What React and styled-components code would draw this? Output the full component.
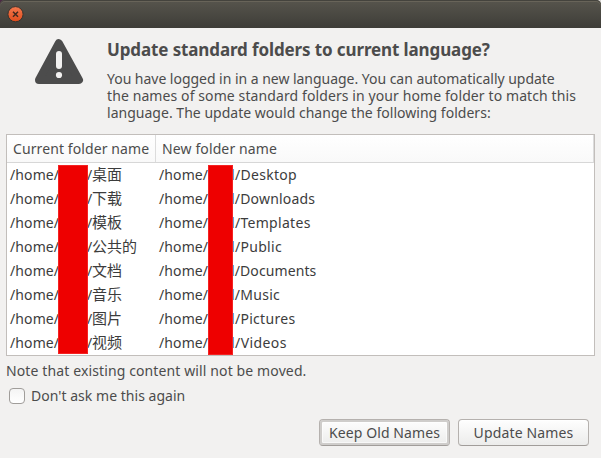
import React from "react";
import styled, { createGlobalStyle } from "styled-components";

const GlobalStyle = createGlobalStyle`
  *, *::before, *::after { box-sizing: border-box; }
  body { margin: 0; background: #f2f1f0; }
`;

const Dialog = styled.div`
  display: flex;
  flex-direction: column;
  width: 601px;
  height: 458px;
  overflow: hidden;
  background: #f2f1f0;
  color: #4c4c4c;
  font-family: "Noto Sans", "Noto Sans CJK SC", sans-serif;
  font-size: 14px;
`;

const TitleBarBackdrop = styled.header`
  flex: none;
  height: 28px;
  background: linear-gradient(90deg, #4b2b44 50%, #d8d6d3 50%);
`;

const TitleBar = styled.div`
  display: flex;
  align-items: center;
  height: 28px;
  padding: 1px 0 0 7px;
  border-radius: 5px 5px 0 0;
  background: linear-gradient(#57554d, #3e3d38);
  box-shadow: inset 0 1px #44433d, inset 0 2px #686459;
`;

const CloseButton = styled.button`
  display: block;
  width: 17px;
  height: 17px;
  padding: 0;
  border: 0;
  background: none;
`;

const Intro = styled.section`
  display: flex;
  height: 106px;
  padding: 10px 0 0 34px;
`;

const WarningIcon = styled.svg`
  flex: none;
  width: 50px;
  height: 47px;
  margin-right: 23px;
`;

const Heading = styled.h1`
  margin: 0 0 9px;
  font-size: 17px;
  font-weight: 700;
  line-height: 23px;
  letter-spacing: -0.12px;
  white-space: nowrap;
`;

const Line = styled.span`
  display: block;
  line-height: ${(p) => p.$height || 17}px;
  letter-spacing: ${(p) => p.$track || 0}px;
  white-space: nowrap;
`;

const Table = styled.section`
  position: relative;
  flex: none;
  width: 589px;
  height: 222px;
  margin-left: 6px;
  border: 1px solid #c2bebb;
  background: #fff;
  color: #3c3c3c;
`;

const Row = styled.div`
  display: grid;
  grid-template-columns: 149px 1fr;
  height: 24px;
`;

const HeaderRow = styled(Row)`
  height: 28px;
  border-right: 1px solid #dcdcdc;
  border-bottom: 1px solid #d7d7d7;
  background: linear-gradient(#fff, #f9f9f9);
  color: #4c4c4c;
`;

const HeaderCell = styled.div`
  padding-left: 6px;
  border-right: ${(p) => (p.$divider ? "1px solid #dcdcdc" : "0")};
`;

const PathCell = styled.div`
  display: grid;
  grid-template-columns: ${(p) => p.$stem}px 1fr;
  padding-left: 3px;
`;

const Chinese = styled.span`
  display: flex;
  font-size: 15px;
  line-height: 23px;
`;

const Slash = styled.span`
  width: 5px;
  font-size: 14px;
  line-height: 24px;
`;

const Redaction = styled.div`
  position: absolute;
  top: 30px;
  left: ${(p) => p.$left}px;
  width: ${(p) => p.$width}px;
  height: ${(p) => p.$height}px;
  border: 1px solid #f52222;
  background: #ee0000;
`;

const Note = styled.div`
  flex: none;
  height: 29px;
  padding: 4px 0 0 6px;
`;

const CheckLabel = styled.label`
  display: flex;
  align-items: center;
  gap: 6px;
  height: 22px;
  padding-left: 9px;
`;

const CheckBox = styled.input`
  appearance: none;
  width: 16px;
  height: 16px;
  margin: 0;
  border: 1px solid #a09d9a;
  border-radius: 4px;
  background: linear-gradient(#f4f4f4, #fff);
`;

const Actions = styled.footer`
  display: flex;
  justify-content: flex-end;
  gap: 8px;
  padding: 12px 12px 0 0;
`;

const Button = styled.button`
  width: 131px;
  height: 27px;
  padding: 0;
  border: 1px solid #b5b1ae;
  border-bottom-color: #a19d9a;
  border-radius: 4px;
  background: linear-gradient(#fefefe, #ececeb);
  box-shadow: ${(p) =>
    p.$focused ? "inset 0 0 0 2px #cfcdcb, inset 0 0 0 3px #ffffff99" : "inset 0 1px #fff"};
  color: #4c4c4c;
  font: inherit;
`;

const folders = [
  ["桌面", "Desktop", 0.3],
  ["下载", "Downloads", 0.18],
  ["模板", "Templates", 0.3],
  ["公共的", "Public", 0.3],
  ["文档", "Documents", 0.1],
  ["音乐", "Music", 0.25],
  ["图片", "Pictures", 0.3],
  ["视频", "Videos", 0.42],
];

export default function App() {
  return (
    <Dialog>
      <GlobalStyle />
      <TitleBarBackdrop>
        <TitleBar>
          <CloseButton aria-label="Close">
            <svg width="17" height="17" viewBox="0 0 17 17">
              <defs>
                <linearGradient id="close" x1="0" y1="0" x2="0" y2="1">
                  <stop offset="0" stopColor="#f4794e" />
                  <stop offset="1" stopColor="#df4c1c" />
                </linearGradient>
              </defs>
              <circle cx="8.5" cy="8.2" r="7.6" fill="url(#close)" stroke="#35332e" />
              <path d="M6 5.7l5 5M11 5.7l-5 5" stroke="#40291f" strokeWidth="1.5" />
            </svg>
          </CloseButton>
        </TitleBar>
      </TitleBarBackdrop>
      <Intro>
        <WarningIcon viewBox="0 0 50 47">
          <path
            d="M24.8 5.2L45 42H5Z"
            fill="#4c4c4c"
            stroke="#4c4c4c"
            strokeWidth="8"
            strokeLinejoin="round"
          />
          <rect x="22" y="13" width="6" height="18" rx="3" fill="#f2f1f0" />
          <circle cx="25" cy="37" r="3.1" fill="#f2f1f0" />
        </WarningIcon>
        <div>
          <Heading>Update standard folders to current language?</Heading>
          <Line $track={-0.03}>
            You have logged in in a new language. You can automatically update
          </Line>
          <Line $track={0.1}>
            the names of some standard folders in your home folder to match this
          </Line>
          <Line $track={0.02}>language. The update would change the following folders:</Line>
        </div>
      </Intro>
      <Table>
        <HeaderRow>
          <HeaderCell $divider>
            <Line $height={27} $track={0.1}>Current folder name</Line>
          </HeaderCell>
          <HeaderCell>
            <Line $height={27} $track={0.12}>New folder name</Line>
          </HeaderCell>
        </HeaderRow>
        {folders.map(([from, to, track]) => (
          <Row key={to}>
            <PathCell $stem={77}>
              <Line $height={24} $track={0.1}>/home/</Line>
              <Chinese>
                <Slash>/</Slash>
                {from}
              </Chinese>
            </PathCell>
            <PathCell $stem={72}>
              <Line $height={24} $track={0.1}>/home/</Line>
              <Line $height={24} $track={track}>l/{to}</Line>
            </PathCell>
          </Row>
        ))}
        <Redaction $left={51} $width={30} $height={189} />
        <Redaction $left={201} $width={25} $height={190} />
      </Table>
      <Note>
        <Line $height={22} $track={0.12}>Note that existing content will not be moved.</Line>
      </Note>
      <CheckLabel>
        <CheckBox type="checkbox" />
        <Line $height={22} $track={0.03}>Don't ask me this again</Line>
      </CheckLabel>
      <Actions>
        <Button $focused>
          <Line $height={25} $track={0.1}>Keep Old Names</Line>
        </Button>
        <Button>
          <Line $height={25} $track={0.15}>Update Names</Line>
        </Button>
      </Actions>
    </Dialog>
  );
}
